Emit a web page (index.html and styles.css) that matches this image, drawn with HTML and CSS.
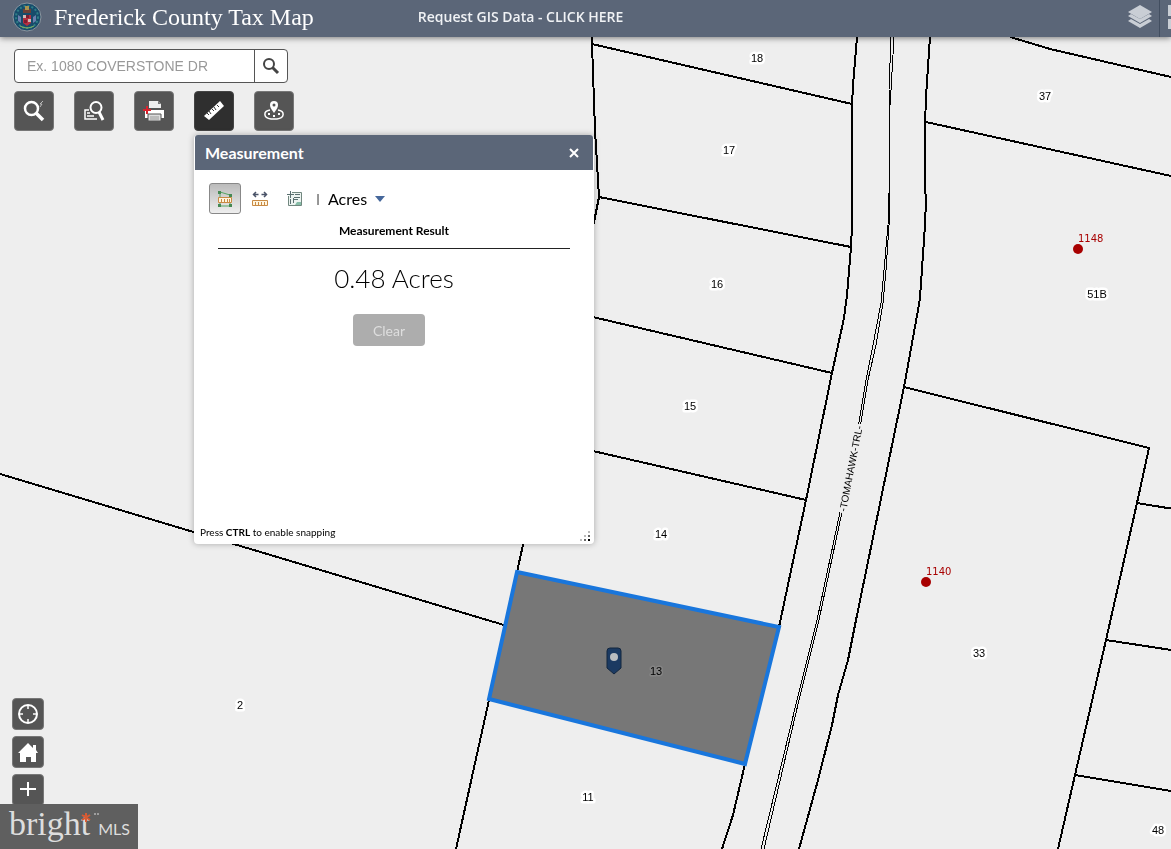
FILE: index.html
```html
<!DOCTYPE html>
<html lang="en">
<head>
<meta charset="utf-8">
<meta name="viewport" content="width=device-width, initial-scale=1">
<title>Frederick County Tax Map</title>
<link rel="stylesheet" href="styles.css">
</head>
<body>
<svg class="map" role="img" aria-label="Parcel map">
  <g class="parcels">
    <path d="M592 37V44L595 130L599 197L594 222L517 572M592 44L852 104M599 197L851 247M580 314L832 373M580 448L806 500M0 474L504 625M489 700L456 849L440 921"/>
    <path d="M857 37L853 85L852 105V225L851 247L847 295L844 318L832 373L806 500L779 627L745 764L733 815L722 849L700 921"/>
    <path d="M930 37L926 97L925 125V187L926 200L925 225L920 298L918 310L904 387L856 620L848 660L838 695L832 725L818 780L799 849L779 921"/>
    <path d="M1010 37L1050 49L1171 77L1400 130M926 122L1171 176L1400 226M904 387L1149 448L1137 503L1106 640L1075 775L1058 849L1042 921M1137 503L1400 546M1106 640L1400 685M1075 775L1400 829"/>
  </g>
  <g class="centerline">
    <path d="M894 37L891 90L889 120V225L886 270L883 303L876 345L868 380L860 428"/>
    <path d="M891 37L889 90V193L888 225L884 270L881 303L873 345L866 380L858 428"/>
    <path d="M842 512L819 620L799 700L764 849L747 921M840 512L817 620L797 700L761 849L745 921"/>
  </g>
  <path class="selection" d="M517 572L779 627L745 764L489 699Z"/>
  <text class="street" transform="translate(846 512) rotate(-79)">-TOMAHAWK-TRL-</text>
  <g class="lots">
    <text x="757" y="62">18</text><text x="729" y="154">17</text><text x="717" y="288">16</text>
    <text x="690" y="410">15</text><text x="661" y="538">14</text><text x="588" y="801">11</text>
    <text x="240" y="709">2</text><text x="1045" y="100">37</text><text x="1097" y="298">51B</text>
    <text x="979" y="657">33</text><text x="1158" y="834">48</text>
    <text class="selected-lot" x="656" y="675">13</text>
  </g>
  <g class="addresses">
    <circle cx="1078" cy="249" r="5"/><text x="1078" y="242">1148</text>
    <circle cx="926" cy="582" r="5"/><text x="926" y="575">1140</text>
  </g>
  <path d="M607 651Q607 648 610 648H618Q621 648 621 651V668L614 674L607 668Z" fill="#1b3a62" stroke="#12263f"/>
  <circle cx="614" cy="657" r="4" fill="#b9bdc0"/>
</svg>

<header class="topbar">
  <svg class="seal" viewBox="0 0 30 30" aria-hidden="true">
    <circle cx="15" cy="15" r="14" fill="#174c6b" stroke="#8b949d" stroke-width="1"/>
    <circle cx="15" cy="15" r="11" fill="none" stroke="#2f7f86" stroke-width="2" stroke-dasharray="2 2"/>
    <path d="M11 7h8v4h-8z" fill="#6d4037"/><path d="M13 4h4v4h-4z" fill="#a99450"/>
    <path d="M11 13h8v8l-4 3-4-3z" fill="#b52f3f"/>
    <path d="M11 13h3v3h-3zM16 17h3v3h-3z" fill="#cfb9b5"/><path d="M14 13h3v3h-3zM12 18h3v3h-3z" fill="#7c1d31"/>
    <path d="M6 13l3 2v6l-3-2zM24 13l-3 2v6l3-2z" fill="#6c7fae"/><path d="M8 24q7 4 14 0" stroke="#86b75e" stroke-width="1" fill="none"/>
  </svg>
  <h1>Frederick County Tax Map</h1>
  <a class="data-link" href="#data">Request GIS Data - CLICK HERE</a>
  <div class="top-actions">
    <button type="button" aria-label="Layer list"><svg width="26" height="26" viewBox="0 0 26 26"><path d="M13 1L25 8L13 15L1 8Z"/><path d="M1 12l3-2 9 5 9-5 3 2-12 7zM1 17l3-2 9 5 9-5 3 2-12 7z"/></svg></button>
    <button type="button" class="edge" aria-label="Basemap gallery"><svg width="24" height="26" viewBox="0 0 24 26"><path d="M0 1h10v11H0zM13 1h10v11H13zM0 15h10v10H0zM13 15h10v10H13z"/></svg></button>
  </div>
</header>

<main>
  <div class="tools">
    <form class="search">
      <input type="text" aria-label="Search address" placeholder="Ex. 1080 COVERSTONE DR">
      <button type="button" aria-label="Search"><svg width="18" height="18" viewBox="0 0 18 18" fill="none" stroke="#444"><circle cx="7" cy="7" r="5" stroke-width="2"/><path d="M10.500 10.500L16 16" stroke-width="3"/></svg></button>
    </form>
    <div class="widgets">
      <button type="button" aria-label="Enhanced search"><svg viewBox="0 0 24 24"><circle cx="9.500" cy="9.500" r="6.500" fill="none" stroke="#fff" stroke-width="2.500"/><path d="M14 14l7 7" stroke="#fff" stroke-width="3.500"/><path d="M21 2l-3 3h2l-2 3" fill="none" stroke="#bbb"/></svg></button>
      <button type="button" aria-label="Query"><svg viewBox="0 0 24 24" fill="none" stroke="#fff"><circle cx="14" cy="8.500" r="5.500" stroke-width="2"/><path d="M17 13l4 8" stroke-width="3"/><path d="M7 11H3v9h12M5 14h3M5 17h7" stroke-width="1.500"/></svg></button>
      <button type="button" aria-label="Print"><svg viewBox="0 0 24 24"><path d="M7 2h9l3 3v4H7z" fill="#eee"/><path d="M16 2v3h3" fill="#777"/><path d="M3 11h19v8H3z" fill="#fff"/><path d="M6 15h13v7H6z" fill="#ddd" stroke="#555"/><path d="M8 18h9M8 20h9" stroke="#999"/><path d="M1 11h8M5 7v8" stroke="#d8232e" stroke-width="2"/></svg></button>
      <button type="button" class="active" aria-label="Measurement" aria-pressed="true"><svg viewBox="0 0 24 24"><path d="M2 17L18 2l4 5L7 21z" fill="#fff"/><path d="M5 14l2 2M7 12l2 3M10 10l2 2M12 8l2 3M15 6l2 2" stroke="#333"/></svg></button>
      <button type="button" aria-label="Coordinates"><svg viewBox="0 0 24 24" fill="none" stroke="#fff"><path d="M12 14C9 10 8 8 8 6a4 4 0 0 1 8 0c0 2-1 4-4 8z" fill="#fff" stroke="none"/><circle cx="12" cy="6" r="1.500" fill="#555" stroke="none"/><path d="M8 11C1 12 1 19 9 20h6c8-1 8-8 1-9" stroke-width="1.500"/><path d="M6 15h2M16 15h2M12 16v2" stroke-width="2"/></svg></button>
    </div>
  </div>

  <section class="panel" aria-labelledby="panel-title">
    <div class="panel-head">
      <h2 id="panel-title">Measurement</h2>
      <button type="button" aria-label="Close"><svg width="10" height="10" viewBox="0 0 10 10"><path d="M1 1l8 8M9 1L1 9" stroke="#fff" stroke-width="2"/></svg></button>
    </div>
    <div class="panel-body">
      <div class="modes">
        <button type="button" class="picked" aria-label="Area" aria-pressed="true"><svg width="16" height="18" viewBox="0 0 16 18" fill="none"><path d="M3 2l10 3M3 3v12M13 6v9M3 16h10" stroke="#55a562"/><path d="M1.500 7.500h13v5h-13z" fill="#fff5df" stroke="#c98a43"/><path d="M4.500 9v3M7.500 9v3M10.500 9v3M12.500 9v3" stroke="#c98a43"/><path d="M1 1h3v3H1zM12 4h3v3h-3zM1 14h3v3H1zM12 14h3v3h-3z" fill="#458953"/></svg></button>
        <button type="button" aria-label="Distance"><svg width="16" height="16" viewBox="0 0 16 16" fill="none"><path d="M1 3.500h5.500M4 1L1.500 3.500 4 6M9.500 3.500H15M12 1l2.500 2.500L12 6" stroke="#4a5368" stroke-width="1.500"/><path d="M.5 9.500h15v5H.5z" fill="#fff5df" stroke="#c98a43"/><path d="M3.500 11v3M6.500 11v3M9.500 11v3M12.500 11v3" stroke="#c98a43"/></svg></button>
        <button type="button" aria-label="Location"><svg width="16" height="16" viewBox="0 0 16 16" fill="none"><path d="M5 1.500h9.500v13h-13V5" fill="#edf4f1" stroke="#71877f"/><path d="M0 3.500h7M3.500 0v7M8 3.500h5M3.500 8v5M7 6.500h6M7 8.500h4M6.500 7v5" stroke="#5a6f70"/><path d="M10 11h4v3H8z" fill="#87bda8"/></svg></button>
        <span class="bar">|</span>
        <button type="button" class="unit">Acres <svg width="10" height="6" viewBox="0 0 10 6"><path d="M0 0h10L5 6z" fill="#45679b"/></svg></button>
      </div>
      <h3>Measurement Result</h3>
      <output>0.48 Acres</output>
      <button type="button" class="clear" disabled>Clear</button>
      <p class="hint">Press <b>CTRL</b> to enable snapping</p>
      <svg class="grip" width="11" height="11" viewBox="0 0 11 11"><path d="M8 0h2v2H8zM4 4h2v2H4zM0 8h2v2H0z" fill="#bbb"/><path d="M8 4h2v2H8zM4 8h2v2H4z" fill="#666"/><path d="M8 8h2v2H8z"/></svg>
    </div>
  </section>

  <nav class="mapnav" aria-label="Map navigation">
    <button type="button" aria-label="My location"><svg width="22" height="22" viewBox="0 0 22 22"><path d="M11 2v4M11 16v4M2 11h4M16 11h4" stroke="#fff" stroke-width="1.500"/><circle cx="11" cy="11" r="9" fill="none" stroke="#fff" stroke-width="2"/></svg></button>
    <button type="button" aria-label="Home"><svg width="22" height="22" viewBox="0 0 22 22"><path d="M1 12L11 2l5 5V4h3v5l2 3h-2v9h-5v-5H9v5H3v-9z" fill="#fff"/></svg></button>
    <button type="button" aria-label="Zoom in"><svg width="22" height="22" viewBox="0 0 22 22"><path d="M11 3v14M3 10h16" stroke="#fff" stroke-width="2"/></svg></button>
  </nav>
  <div class="brand">
    <span class="bright">bright</span><span class="mls">MLS</span>
    <svg class="spark" width="20" height="10" viewBox="0 0 20 10"><path d="M5 0v9M1 2l8 5M9 2L1 7" stroke="#d85a32" stroke-width="2"/><path d="M13 1h2M16 1h2" stroke="#ddd"/></svg>
  </div>
</main>
</body>
</html>
```
FILE: styles.css
```css
* { box-sizing: border-box; }
body {
  margin: 0;
  min-height: 100vh;
  display: flex;
  flex-direction: column;
  overflow: hidden;
  background: #eee;
  color: #000;
  font-family: Lato, "Liberation Sans", sans-serif;
}
button { padding: 0; border: 0; font: inherit; color: inherit; background: none; display: flex; align-items: center; justify-content: center; }
h1, h2, h3, p { margin: 0; }

.map { position: fixed; inset: 0; width: 100%; height: 100%; font-family: "Liberation Sans", Arial, sans-serif; }
.parcels, .centerline { fill: none; stroke: #000; shape-rendering: crispEdges; }
.parcels { stroke-width: 2; }
.centerline { stroke-width: 1; }
.selection { fill: #777; stroke: #1976dc; stroke-width: 4; }
.lots, .street { font-size: 11px; paint-order: stroke; stroke: #fff; stroke-width: 5px; stroke-linejoin: round; }
.lots { text-anchor: middle; }
.lots .selected-lot { stroke: #858585; stroke-width: 3px; }
.street { stroke: #eee; font-size: 10px; }
.addresses { fill: #a80000; font-family: "DejaVu Sans", sans-serif; font-size: 10px; }

.topbar { position: relative; height: 37px; padding-left: 12px; display: flex; align-items: center; background: #5b6678; color: #fff; box-shadow: 0 1px 6px rgba(0, 0, 0, .5); }
.seal { width: 30px; height: 30px; margin: 0 12px 4px 0; flex: none; }
h1 { font: 24px "Liberation Serif", serif; white-space: nowrap; padding-bottom: 2px; }
.data-link { margin-left: 104px; padding-bottom: 5px; color: #f0f2f5; font: 600 14px "Open Sans", sans-serif; white-space: nowrap; text-decoration: none; }
.top-actions { margin-left: auto; height: 100%; display: flex; }
.top-actions button { width: 39px; padding-bottom: 4px; fill: #c9ced5; }
.top-actions .edge { width: 12px; border-left: 1px solid #424e60; justify-content: flex-start; overflow: hidden; padding-left: 8px; }
.edge svg { flex: none; }

main { flex: 1; position: relative; }
.tools { position: absolute; top: 12px; left: 14px; display: grid; gap: 8px; }
.search { display: flex; width: 274px; height: 34px; border: 1px solid #555; border-radius: 4px; background: #fff; overflow: hidden; }
.search input { flex: 1; min-width: 0; border: 0; padding: 0 12px; outline: 0; background: none; font: 14px "Liberation Sans", Arial, sans-serif; }
.search input::placeholder { color: #999; }
.search button { width: 33px; border-left: 1px solid #555; }
.widgets { display: flex; gap: 20px; }
.widgets button { width: 40px; height: 40px; border: 1px solid #777; border-radius: 4px; background: #555; }
.widgets .active { background: #2f2f2f; border-color: #444; }
.widgets svg { width: 24px; height: 24px; }

.panel { position: absolute; top: 98px; left: 194px; width: 400px; padding: 0 1px; display: flex; flex-direction: column; background: #fff; border-radius: 4px; box-shadow: 0 0 6px rgba(0, 0, 0, .3); }
.panel-head { height: 35px; padding: 0 10px; display: flex; align-items: center; justify-content: space-between; background: #5b6678; color: #fff; border-radius: 3px 3px 0 0; }
h2 { font-size: 16px; font-weight: bold; }
.panel-head button { width: 18px; height: 20px; }
.panel-body { position: relative; height: 374px; padding: 13px 5px 4px; display: flex; flex-direction: column; }
.modes { display: flex; align-items: center; gap: 3px; padding-left: 9px; }
.modes button { width: 32px; height: 31px; }
.modes .picked { border: 1px solid #888; border-radius: 3px; background: linear-gradient(#bbb, #eee); }
.modes .bar { width: 8px; text-align: center; font-size: 12px; }
.modes .unit { width: auto; gap: 8px; margin-left: 3px; font-size: 16px; }
h3 { margin: 9px 18px 0; padding-bottom: 9px; border-bottom: 1px solid #222; text-align: center; font-size: 12px; line-height: 16px; }
output { margin-top: 13px; text-align: center; font-size: 26px; font-weight: 300; line-height: 32px; }
.clear { align-self: center; width: 72px; height: 32px; margin: 20px 10px 0 0; border-radius: 4px; background: #adadad; color: #dedede; font-size: 14px; }
.hint { margin-top: auto; font-size: 10px; line-height: 16px; }
.grip { position: absolute; right: 2px; bottom: 2px; }

.mapnav { position: absolute; left: 12px; bottom: 43px; display: grid; gap: 6px; }
.mapnav button { width: 32px; height: 32px; border: 1px solid #777; border-radius: 4px; background: #555; }
.brand { position: absolute; left: 0; bottom: 0; width: 138px; height: 45px; padding: 0 9px; display: flex; align-items: baseline; gap: 8px; background: #5f5f5f; color: #ddd; }
.bright { font: 34px/40px "Liberation Serif", serif; }
.mls { font-size: 16px; font-weight: 400; }
.spark { position: absolute; left: 81px; top: 9px; }
```
